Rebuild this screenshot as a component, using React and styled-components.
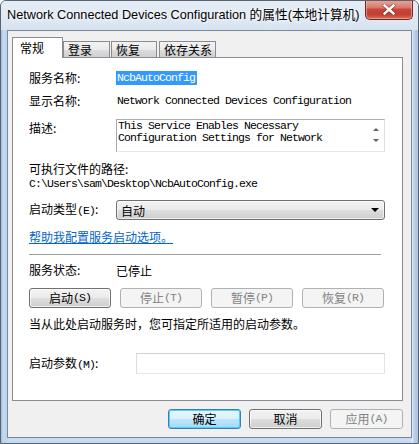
import React from 'react'
import styled, { createGlobalStyle } from 'styled-components'

const GlobalStyle = createGlobalStyle`
  html, body { margin: 0; padding: 0; background: #fff; }
  body {
    font-family: "Noto Sans CJK SC", "Liberation Sans", sans-serif;
    font-size: 12px;
    color: #000;
  }
  * { box-sizing: border-box; }
`

const MONO = `"Liberation Mono", "Noto Sans CJK SC", monospace`

const Window = styled.div`
  width: 419px;
  height: 444px;
  display: flex;
  flex-direction: column;
  border: 1px solid #59636f;
  border-radius: 6px 6px 0 0;
  overflow: hidden;
  background: linear-gradient(90deg, #9fbbdb 0, #c5daf1 2px, #bdd4ee 5px, #c6dbf2 7px,
    #c6dbf2 calc(100% - 7px), #e4f0fb calc(100% - 6px), #b9d1ec calc(100% - 4px), #a8c3e2 100%);
`

const TitleBar = styled.div`
  height: 29px;
  display: flex;
  justify-content: space-between;
  align-items: flex-start;
  background: linear-gradient(180deg, #e4ecf5 0, #dfe8f3 60%, #d6e3f1 100%);
`

const Title = styled.div`
  padding: 6px 0 0 6px;
  font-family: "Liberation Sans", "Noto Sans CJK SC", sans-serif;
  font-size: 12.7px;
  line-height: 16px;
  color: #000;
  text-shadow: 0 0 6px #fff, 0 0 3px #fff;
  white-space: nowrap;
`

const CloseBtn = styled.div`
  width: 48px;
  height: 20px;
  margin: -1px 5px 0 0;
  border: 1px solid #6c2a25;
  border-top: none;
  border-radius: 0 0 5px 5px;
  background: linear-gradient(180deg, #e9a99c 0, #d7796a 40%, #c7453a 50%, #c23e30 75%, #d6705a 100%);
  box-shadow: inset 0 0 0 1px rgba(255, 200, 190, 0.5);
  display: flex;
  align-items: center;
  justify-content: center;
`

const Client = styled.div`
  flex: 1;
  margin: 0 6px 5px 6px;
  border: 1px solid #7b8898;
  background: #f0f0f0;
  padding: 6px 7px 0 4px;
  display: flex;
  flex-direction: column;
`

const TabStrip = styled.div`
  height: 20px;
  display: flex;
  align-items: flex-end;
`

const Tab = styled.div`
  width: ${p => p.$w}px;
  margin-left: ${p => p.$ml || 0}px;
  height: ${p => (p.$active ? 21 : 16)}px;
  margin-bottom: ${p => (p.$active ? -1 : 0)}px;
  position: relative;
  z-index: ${p => (p.$active ? 1 : 0)};
  padding-left: ${p => (p.$active ? 7 : 4)}px;
  padding-top: ${p => (p.$active ? 0 : 1)}px;
  display: flex;
  align-items: center;
  border: 1px solid #898c95;
  border-bottom: none;
  background: ${p => (p.$active ? '#fff' : 'linear-gradient(180deg, #f2f2f2 0, #ebebeb 50%, #dddddd 51%, #cfcfcf 100%)')};
  line-height: 14px;
`

const Panel = styled.div`
  width: 391px;
  height: 344px;
  border: 1px solid #898c95;
  background: #fff;
  padding: 0 17px 0 16px;
  display: flex;
  flex-direction: column;
`

const Row = styled.div`
  display: flex;
  align-items: ${p => p.$align || 'center'};
  height: ${p => p.$h || 16}px;
  margin-top: ${p => p.$mt || 0}px;
`

const Label = styled.div`
  width: ${p => p.$w || 87}px;
  flex: none;
  line-height: 16px;
  white-space: nowrap;
`

const Key = styled.span`
  font-family: ${MONO};
  font-size: 11.5px;
  letter-spacing: -0.9px;
`

const Mono = styled.div`
  font-family: ${MONO};
  font-size: 11.5px;
  letter-spacing: -0.9px;
  line-height: ${p => p.$lh || 14}px;
  white-space: nowrap;
  padding-left: ${p => p.$pl || 0}px;
`

const Selected = styled.span`
  background: #3399ff;
  color: #fff;
  padding: 0 2px 1px 1px;
  line-height: 13px;
  display: inline-block;
`

const TextArea = styled.div`
  width: 269px;
  height: 33px;
  border: 1px solid;
  border-color: #abadb3 #dbdfe6 #e3e9ef #a6a9b0;
  display: flex;
  justify-content: space-between;
`

const ScrollCol = styled.div`
  width: 17px;
  display: flex;
  flex-direction: column;
  align-items: center;
  justify-content: space-between;
  padding: 8px 0 9px;
`

const Arrow = styled.div`
  width: 0;
  height: 0;
  border-left: ${p => p.$s || 3}px solid transparent;
  border-right: ${p => p.$s || 3}px solid transparent;
  ${p => (p.$up ? 'border-bottom' : 'border-top')}: ${p => p.$h || 3}px solid ${p => p.$c || '#606060'};
`

const Select = styled.div`
  width: 269px;
  height: 20px;
  border: 1px solid #707070;
  border-radius: 3px;
  background: linear-gradient(180deg, #f2f2f2 0, #ebebeb 50%, #dddddd 51%, #cfcfcf 100%);
  box-shadow: inset 0 0 0 1px rgba(255, 255, 255, 0.6);
  display: flex;
  align-items: center;
  justify-content: space-between;
  padding: 0 5px 0 4px;
`

const Link = styled.a`
  color: #0066cc;
  text-decoration: underline;
  line-height: 16px;
  cursor: pointer;
`

const Separator = styled.div`
  width: 352px;
  height: 1px;
  background: #a0a0a0;
  margin-top: ${p => p.$mt}px;
`

const ButtonRow = styled.div`
  display: flex;
  gap: ${p => p.$gap}px;
  margin-top: ${p => p.$mt || 0}px;
  justify-content: ${p => p.$justify || 'flex-start'};
`

const Button = styled.div`
  width: ${p => p.$w}px;
  height: ${p => p.$h || 20}px;
  border: 1px solid ${p => (p.$disabled ? '#adb2b5' : p.$default ? '#3c7fb1' : '#707070')};
  border-radius: 3px;
  background: ${p =>
    p.$disabled
      ? '#f4f4f4'
      : p.$default
      ? 'linear-gradient(180deg, #eaf6fd 0, #d9f0fc 50%, #bee6fd 51%, #a7d9f5 100%)'
      : 'linear-gradient(180deg, #f2f2f2 0, #ebebeb 50%, #dddddd 51%, #cfcfcf 100%)'};
  box-shadow: ${p => (p.$default ? 'inset 0 0 0 1px #48d1fb' : p.$disabled ? 'none' : 'inset 0 0 0 1px rgba(255,255,255,0.7)')};
  color: ${p => (p.$disabled ? '#838383' : '#000')};
  display: flex;
  align-items: center;
  justify-content: center;
  line-height: 16px;
  white-space: nowrap;
`

const Input = styled.div`
  width: 249px;
  height: 21px;
  border: 1px solid;
  border-color: #cfd1d6 #e2e3ea #e3e9ef #dcdee3;
  background: #fff;
`

const CloseIcon = () => (
  <svg width="14" height="11" viewBox="0 0 14 11">
    <path d="M2.5 1.5 L11.5 9.5 M11.5 1.5 L2.5 9.5" stroke="#5b2320" strokeWidth="4" strokeLinecap="round" opacity="0.55" />
    <path d="M2.5 1.5 L11.5 9.5 M11.5 1.5 L2.5 9.5" stroke="#fff" strokeWidth="2.4" strokeLinecap="square" />
  </svg>
)

export default function App() {
  return (
    <>
      <GlobalStyle />
      <Window>
        <TitleBar>
          <Title>Network Connected Devices Configuration 的属性(本地计算机)</Title>
          <CloseBtn><CloseIcon /></CloseBtn>
        </TitleBar>
        <Client>
          <TabStrip>
            <Tab $active $w={51}>常规</Tab>
            <Tab $w={47}>登录</Tab>
            <Tab $w={46} $ml={1}>恢复</Tab>
            <Tab $w={57} $ml={2}>依存关系</Tab>
          </TabStrip>
          <Panel>
            <Row $mt={12}>
              <Label>服务名称:</Label>
              <Mono><Selected>NcbAutoConfig</Selected></Mono>
            </Row>
            <Row $mt={7}>
              <Label>显示名称:</Label>
              <Mono $pl={1}>Network Connected Devices Configuration</Mono>
            </Row>
            <Row $mt={10} $h={33} $align="flex-start">
              <Label style={{ paddingTop: 1 }}>描述:</Label>
              <TextArea>
                <Mono $lh={12} $pl={1}>
                  This Service Enables Necessary<br />Configuration Settings for Network
                </Mono>
                <ScrollCol>
                  <Arrow $up />
                  <Arrow />
                </ScrollCol>
              </TextArea>
            </Row>
            <Row $mt={9}>
              <Label $w={200}>可执行文件的路径:</Label>
            </Row>
            <Row $h={14}>
              <Mono>C:\Users\sam\Desktop\NcbAutoConfig.exe</Mono>
            </Row>
            <Row $mt={9} $h={20}>
              <Label>启动类型<Key>(E)</Key>:</Label>
              <Select>
                <span>自动</span>
                <Arrow $s={4} $h={4} $c="#000" />
              </Select>
            </Row>
            <Row $mt={9}>
              <Link>帮助我配置服务启动选项。</Link>
            </Row>
            <Separator $mt={9} />
            <Row $mt={7}>
              <Label>服务状态:</Label>
              <span>已停止</span>
            </Row>
            <ButtonRow $gap={9} $mt={10}>
              <Button $w={82}>启动<Key>(S)</Key></Button>
              <Button $w={82} $disabled>停止<Key>(T)</Key></Button>
              <Button $w={82} $disabled>暂停<Key>(P)</Key></Button>
              <Button $w={82} $disabled>恢复<Key>(R)</Key></Button>
            </ButtonRow>
            <Row $mt={8}>
              <Label $w={360}>当从此处启动服务时，您可指定所适用的启动参数。</Label>
            </Row>
            <Row $mt={21} $h={21}>
              <Label $w={107}>启动参数<Key>(M)</Key>:</Label>
              <Input />
            </Row>
          </Panel>
          <ButtonRow $gap={8} $mt={8} $justify="flex-end" style={{ width: 391 }}>
            <Button $w={73} $default>确定</Button>
            <Button $w={73}>取消</Button>
            <Button $w={73} $disabled>应用<Key>(A)</Key></Button>
          </ButtonRow>
        </Client>
      </Window>
    </>
  )
}
